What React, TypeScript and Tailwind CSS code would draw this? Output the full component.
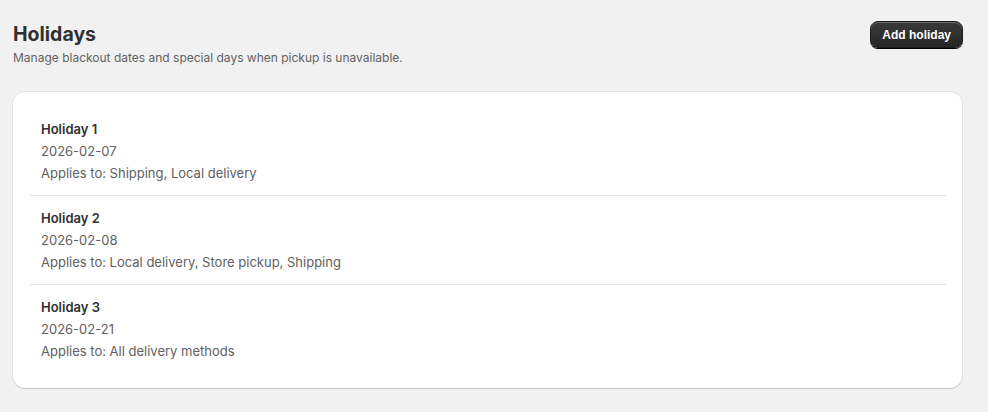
import React from "react";

const holidays = [
  { name: "Holiday 1", date: "2026-02-07", applies: "Shipping, Local delivery" },
  { name: "Holiday 2", date: "2026-02-08", applies: "Local delivery, Store pickup, Shipping" },
  { name: "Holiday 3", date: "2026-02-21", applies: "All delivery methods" },
];

function HolidayRow({ name, date, applies }: { name: string; date: string; applies: string }) {
  return (
    <div className="px-3 py-3 flex flex-col gap-0.5 text-[13px] leading-5">
      <p className="font-semibold text-[#303030]">{name}</p>
      <p className="text-[#616161]">{date}</p>
      <p className="text-[#616161]">Applies to: {applies}</p>
    </div>
  );
}

export default function App() {
  return (
    <div
      className="min-h-[412px] bg-[#f1f1f1] pl-[13px] pr-[26px] pt-5 pb-6"
      style={{ fontFamily: "Inter, 'Noto Sans', sans-serif" }}
    >
      <div className="flex flex-row items-start justify-between">
        <div className="flex flex-col">
          <h1 className="text-[19.5px] leading-7 font-bold text-[#303030]">Holidays</h1>
          <p className="text-[12px] leading-5 text-[#616161]">
            Manage blackout dates and special days when pickup is unavailable.
          </p>
        </div>
        <button
          className="mt-px mr-[-1px] h-[27px] px-[11px] rounded-lg bg-gradient-to-b from-[#3a3a3a] to-[#262626] text-white text-[12px] font-bold shadow-[0_1px_0_#000,inset_0_1px_0_rgba(255,255,255,0.25)] border border-[#1a1a1a]"
          style={{ fontFamily: "'Liberation Sans', Arial, sans-serif" }}
        >
          Add holiday
        </button>
      </div>
      <div className="mt-6 bg-white rounded-xl px-4 pt-[15px] pb-[15px] shadow-[0_1px_0_rgba(0,0,0,0.12),0_0_0_1px_rgba(0,0,0,0.06)]">
        <div className="flex flex-col divide-y divide-[#e3e3e3]">
          {holidays.map((h) => (
            <HolidayRow key={h.name} {...h} />
          ))}
        </div>
      </div>
    </div>
  );
}
